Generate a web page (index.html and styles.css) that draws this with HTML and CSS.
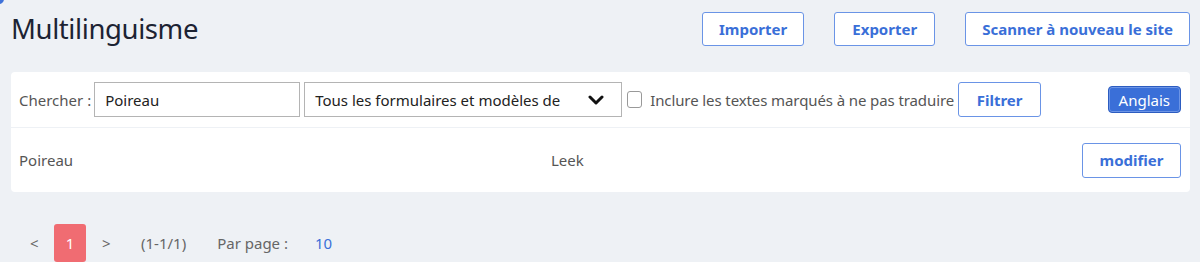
FILE: index.html
```html
<!DOCTYPE html>
<html lang="fr">

<head>
  <meta charset="UTF-8">
  <meta name="viewport" content="width=device-width, initial-scale=1.0">
  <title>Multilinguisme</title>

  <link rel="stylesheet" href="styles.css">
</head>

<body>
  <span class="corner-dot"></span>

  <div class="page-head">
    <h1 class="page-title">Multilinguisme</h1>
    <div class="head-actions">
      <button class="btn-outline">Importer</button>
      <button class="btn-outline">Exporter</button>
      <button class="btn-outline">Scanner à nouveau le site</button>
    </div>
  </div>

  <div class="card">
    <div class="filter-row">
      <label class="search-label" for="search">Chercher :</label>
      <input id="search" class="text-input" value="Poireau" />
      <div class="select-box">
        <span>Tous les formulaires et modèles de</span>
        <svg width="16" height="12" viewBox="0 0 16 12">
          <path d="M2 3 L8 9 L14 3" fill="none" stroke="#111" stroke-width="3" stroke-linecap="round" stroke-linejoin="round" />
        </svg>
      </div>
      <label class="check-label">
        <span class="check-box"></span>
        Inclure les textes marqués à ne pas traduire
      </label>
      <button class="btn-outline btn-filter">Filtrer</button>
      <button class="btn-lang">Anglais</button>
    </div>

    <div class="trans-row">
      <div class="cell-source">Poireau</div>
      <div class="cell-target">Leek</div>
      <button class="btn-outline btn-edit">modifier</button>
    </div>
  </div>

  <div class="pager">
    <span class="pager-arrow">&lt;</span>
    <span class="pager-current">1</span>
    <span class="pager-arrow">&gt;</span>
    <span class="pager-info">(1-1/1)</span>
    <span class="pager-info">Par page :</span>
    <span class="pager-size">10</span>
  </div>
</body>

</html>
```

FILE: styles.css
```css
body {
  margin: 0;
  background: #eef1f5;
  font-family: "Noto Sans", "Open Sans", sans-serif;
  color: #555;
  position: relative;
  height: 262px;
  overflow: hidden;
}

/* petit coin bleu en haut à gauche */
.corner-dot {
  position: absolute;
  left: -6px;
  top: -6px;
  width: 10px;
  height: 10px;
  border-radius: 50%;
  background: #3f72d9;
}

.page-head {
  display: flex;
  align-items: flex-start;
  justify-content: space-between;
  padding: 12px 10px 0 11px;
  height: 60px;
  box-sizing: border-box;
}

.page-title {
  margin: 0;
  font-size: 27.5px;
  font-weight: 400;
  color: #1c2333;
  line-height: 34px;
  letter-spacing: -0.4px;
}

.head-actions {
  display: flex;
  gap: 30px;
}

.btn-outline {
  font-family: inherit;
  background: #fff;
  border: 1px solid #6a94e6;
  border-radius: 3px;
  color: #3a6fd8;
  font-weight: 700;
  font-size: 15px;
  height: 34px;
  padding: 0 16px;
  cursor: pointer;
}

.head-actions .btn-outline {
  min-width: 101px;
}

.card {
  margin: 12px 10px 0 11px;
  background: #fff;
  border-radius: 4px;
}

.filter-row {
  display: flex;
  align-items: center;
  height: 55px;
  padding: 0 8px;
  border-bottom: 1px solid #eef1f5;
}

.search-label {
  font-size: 15px;
  color: #555;
  margin-right: 3px;
}

.text-input {
  font-family: inherit;
  font-size: 15px;
  color: #222;
  width: 206px;
  height: 35px;
  box-sizing: border-box;
  border: 1px solid #b4b4b4;
  padding: 0 10px;
  outline: none;
}

.select-box {
  display: flex;
  align-items: center;
  justify-content: space-between;
  width: 318px;
  height: 35px;
  box-sizing: border-box;
  margin-left: 4px;
  border: 1px solid #b4b4b4;
  padding: 0 17px 0 10px;
  font-size: 15px;
  color: #222;
}

.check-label {
  display: flex;
  align-items: center;
  gap: 8px;
  margin-left: 5px;
  font-size: 15px;
  letter-spacing: -0.1px;
  color: #555;
}

.check-box {
  width: 13px;
  height: 15px;
  border: 1px solid #999;
  border-radius: 3px;
}

.btn-filter {
  margin-left: 4px;
  width: 83px;
  height: 35px;
}

.btn-lang {
  font-family: inherit;
  margin-left: auto;
  margin-right: 1px;
  background: #3a6fd8;
  color: #fff;
  border: 1px solid #2c5cc0;
  box-shadow: inset 0 0 0 1px #6d95e6;
  border-radius: 4px;
  font-size: 15px;
  height: 27px;
  padding: 0 10px;
}

.trans-row {
  display: flex;
  align-items: center;
  height: 64px;
  padding: 0 9px 0 8px;
  font-size: 15px;
  color: #555;
}

.cell-source {
  width: 532px;
}

.cell-target {
  flex: 1;
}

.btn-edit {
  height: 35px;
  width: 99px;
}

.pager {
  display: flex;
  align-items: center;
  height: 38px;
  margin-top: 32px;
  padding-left: 30px;
  font-size: 15px;
  color: #666;
}

.pager-arrow {
  width: 8px;
}

.pager-current {
  margin: 0 16px;
  width: 32px;
  height: 38px;
  display: flex;
  align-items: center;
  justify-content: center;
  background: #f06c72;
  color: #fff;
  border-radius: 3px;
}

.pager-info {
  margin-left: 31px;
}

.pager-size {
  margin-left: 27px;
  color: #3a6fd8;
}
```
